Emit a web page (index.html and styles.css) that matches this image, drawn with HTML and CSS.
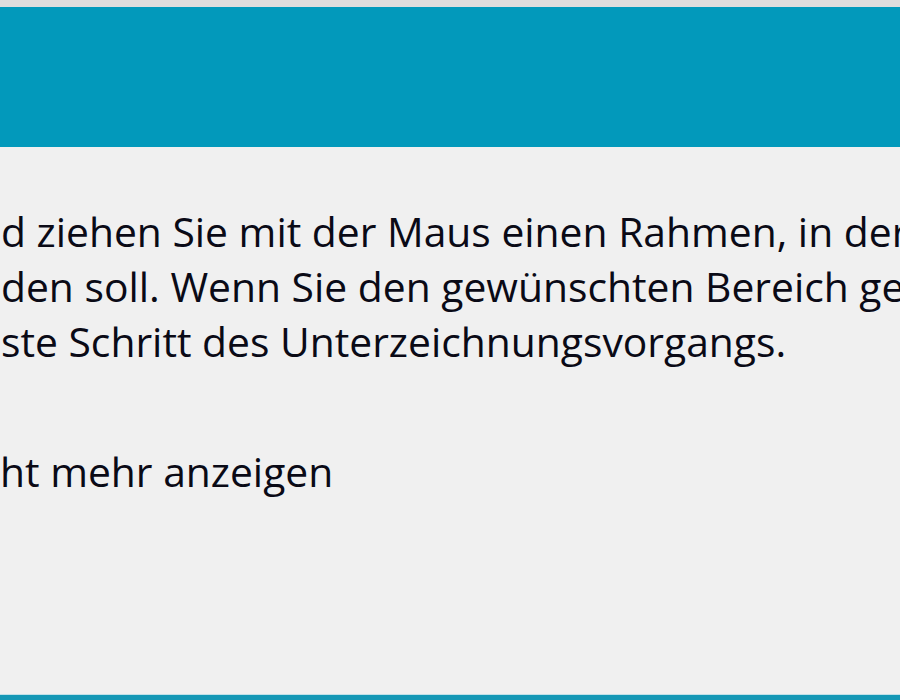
FILE: index.html
```html
<!DOCTYPE html>
<html lang="de">
<head>
<meta charset="utf-8">
<link rel="stylesheet" href="styles.css">
</head>
<body>
<div class="window">
  <div class="top-edge"></div>
  <div class="titlebar"></div>
  <div class="content">
    <div class="message">
      <div class="line">d ziehen Sie mit der Maus einen Rahmen, in der</div>
      <div class="line">den soll. Wenn Sie den gewünschten Bereich ge</div>
      <div class="line">ste Schritt des Unterzeichnungsvorgangs.</div>
    </div>
    <div class="option">ht mehr anzeigen</div>
  </div>
  <div class="bottom-edge"></div>
</div>
</body>
</html>
```
FILE: styles.css
```css
html, body {
  margin: 0;
  padding: 0;
  width: 900px;
  height: 700px;
  overflow: hidden;
  background: #f0f0f0;
}
.window {
  display: flex;
  flex-direction: column;
  width: 900px;
  height: 700px;
}
.top-edge {
  height: 7px;
  background: #dfdddd;
}
.titlebar {
  height: 140px;
  background: #0299bb;
}
.content {
  flex: 1;
  background: #f0f0f0;
  font-family: "Open Sans", "Noto Sans", sans-serif;
  font-size: 40.8px;
  color: #0a0a16;
  overflow: hidden;
}
.message {
  padding-top: 57px;
  padding-left: 1px;
}
.line {
  height: 55px;
  line-height: 55px;
  white-space: nowrap;
  overflow: hidden;
}
.option {
  margin-top: 75px;
  height: 55px;
  line-height: 55px;
  white-space: nowrap;
}
.bottom-edge {
  height: 5px;
  background: #1497b5;
  border-top: 1px solid #bfe0e8;
}
```
